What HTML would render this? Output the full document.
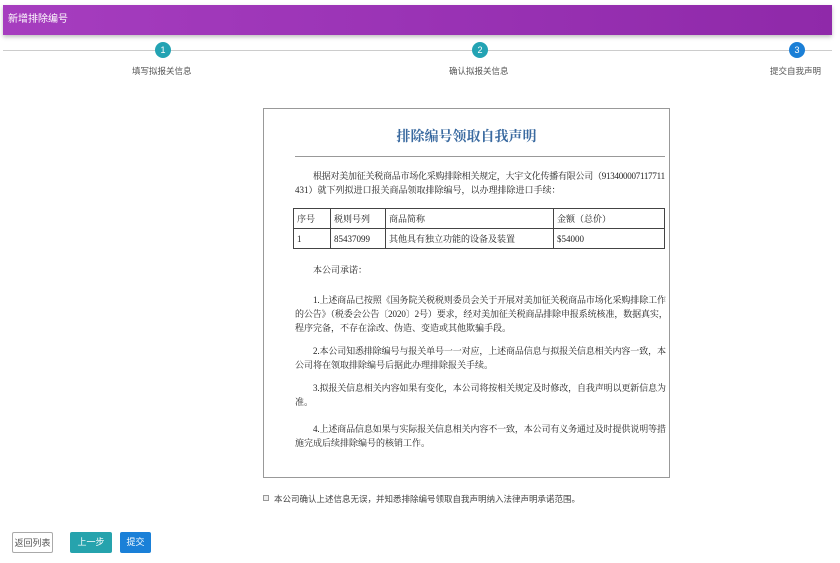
<!DOCTYPE html>
<html><head><meta charset="utf-8"><style>
*{margin:0;padding:0;box-sizing:border-box}
body{width:840px;height:563px;background:#fff;position:relative;overflow:hidden;font-family:"Liberation Sans","Noto Sans CJK SC",sans-serif;color:#333}
.a{position:absolute;white-space:nowrap}
.hdr{left:3px;top:5px;width:829px;height:30px;background:linear-gradient(90deg,#a63dbf,#9a33b5 50%,#8f29a9);box-shadow:0 2px 4px rgba(0,0,0,.25);color:#fff;font-size:10px;line-height:30px;padding-left:5px}
.line{left:3px;top:50px;width:829px;height:1px;background:#ccc}
.c{width:16px;height:16px;border-radius:50%;background:#23a3b3;color:#fff;font-size:9px;text-align:center;line-height:16px}
.lb{font-size:8.5px;color:#555}
.doc{left:263px;top:108px;width:407px;height:370px;border:1px solid #999}
.t{font-family:"Liberation Serif","Noto Serif CJK SC",serif;font-size:9px;color:#222}
.s{letter-spacing:-0.25px}
.s2{letter-spacing:-0.12px}
table{border-collapse:collapse;position:absolute;left:293px;top:208px;width:372px}
td{border:1px solid #444;height:20px;font-size:9px;padding-left:3px;font-family:"Liberation Serif","Noto Serif CJK SC",serif;color:#222}
.btn{top:532px;height:21px;font-size:9px;line-height:21px;text-align:center;border-radius:2px}
</style></head><body>
<div class="a hdr">新增排除编号</div>
<div class="a line"></div>
<div class="a c" style="left:155px;top:42px">1</div>
<div class="a c" style="left:472px;top:42px">2</div>
<div class="a c" style="left:789px;top:42px;background:#1b7fd6">3</div>
<div class="a lb" style="left:132px;top:65px">填写拟报关信息</div>
<div class="a lb" style="left:449px;top:65px">确认拟报关信息</div>
<div class="a lb" style="left:770px;top:65px">提交自我声明</div>
<div class="a doc"></div>
<div class="a" style="left:263px;width:407px;top:126px;text-align:center;font-size:14px;font-weight:bold;color:#3a6aa0;font-family:'Liberation Serif','Noto Serif CJK SC',serif">排除编号领取自我声明</div>
<div class="a" style="left:295px;top:156px;width:370px;height:1px;background:#999"></div>
<div class="a t s" style="left:313px;top:169px">根据对美加征关税商品市场化采购排除相关规定，大宇文化传播有限公司（913400007117711</div>
<div class="a t" style="left:295px;top:183px">431）就下列拟进口报关商品领取排除编号，以办理排除进口手续：</div>
<table><tr><td style="width:37px">序号</td><td style="width:55px">税则号列</td><td style="width:168px">商品简称</td><td>金额（总价）</td></tr>
<tr><td>1</td><td>85437099</td><td>其他具有独立功能的设备及装置</td><td>$54000</td></tr></table>
<div class="a t" style="left:313px;top:263px">本公司承诺：</div>
<div class="a t s2" style="left:313px;top:293px">1.上述商品已按照《国务院关税税则委员会关于开展对美加征关税商品市场化采购排除工作</div>
<div class="a t s2" style="left:295px;top:307px">的公告》（税委会公告〔2020〕2号）要求，经对美加征关税商品排除申报系统核准，数据真实，</div>
<div class="a t" style="left:295px;top:321px">程序完备，不存在涂改、伪造、变造或其他欺骗手段。</div>
<div class="a t s2" style="left:313px;top:344px">2.本公司知悉排除编号与报关单号一一对应，上述商品信息与拟报关信息相关内容一致，本</div>
<div class="a t" style="left:295px;top:358px">公司将在领取排除编号后据此办理排除报关手续。</div>
<div class="a t s2" style="left:313px;top:381px">3.拟报关信息相关内容如果有变化，本公司将按相关规定及时修改，自我声明以更新信息为</div>
<div class="a t" style="left:295px;top:395px">准。</div>
<div class="a t s2" style="left:313px;top:422px">4.上述商品信息如果与实际报关信息相关内容不一致，本公司有义务通过及时提供说明等措</div>
<div class="a t" style="left:295px;top:436px">施完成后续排除编号的核销工作。</div>
<div class="a" style="left:263px;top:495px;width:6px;height:6px;border:1px solid #999;background:#eee"></div>
<div class="a" style="left:274px;top:493px;font-size:8.5px;color:#444">本公司确认上述信息无误，并知悉排除编号领取自我声明纳入法律声明承诺范围。</div>
<div class="a btn" style="left:12px;width:41px;border:1px solid #aaa;color:#555;background:#fff">返回列表</div>
<div class="a btn" style="left:70px;width:42px;background:#26a3ad;color:#fff">上一步</div>
<div class="a btn" style="left:120px;width:31px;background:#1a80d8;color:#fff">提交</div>
</body></html>
